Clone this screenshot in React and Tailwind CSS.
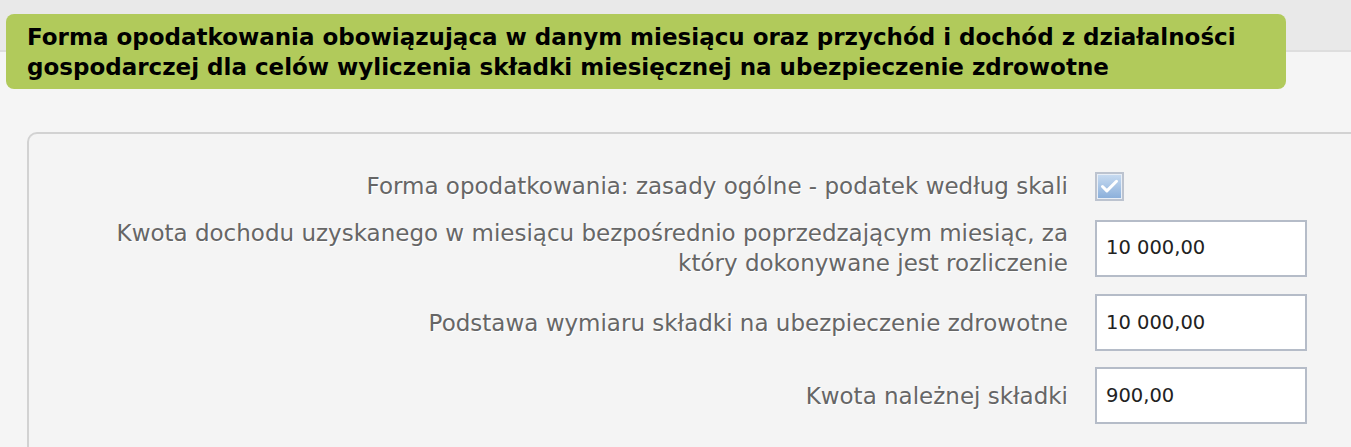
import { Check } from 'lucide-react';

const rows = [
  { label: 'Kwota dochodu uzyskanego w miesiącu bezpośrednio poprzedzającym miesiąc, za który dokonywane jest rozliczenie', value: '10 000,00', gap: 'mt-[17px]' },
  { label: 'Podstawa wymiaru składki na ubezpieczenie zdrowotne', value: '10 000,00', gap: 'mt-[16px]' },
  { label: 'Kwota należnej składki', value: '900,00', gap: 'mt-[16px]' },
];

function Label({ children }) {
  return (
    <div className="w-[1039px] shrink-0 pl-[59px] text-right text-[23px] leading-[30px] text-[#666] [text-shadow:1px_1px_0_#fff]">
      {children}
    </div>
  );
}

export default function App() {
  return (
    <div className="min-h-[447px] overflow-hidden bg-[linear-gradient(#e9e9e9_0_50px,#dedede_50px_52px,#f5f5f5_52px)] pt-[14px] font-['DejaVu_Sans',sans-serif]">
      <div className="ml-[6px] w-[1280px] rounded-[8px] bg-[#b1ca5b] px-[21px] pt-[8px] pb-[7px] text-[23px] font-bold leading-[30px] text-black">
        Forma opodatkowania obowiązująca w danym miesiącu oraz przychód i dochód z działalności
        <br />
        gospodarczej dla celów wyliczenia składki miesięcznej na ubezpieczenie zdrowotne
      </div>

      <div className="ml-[27px] mt-[43px] min-h-[330px] rounded-tl-[10px] border-l-2 border-t-2 border-[#d2d2d2] bg-[#f4f4f4] pt-[37px]">
        <div className="flex items-center">
          <Label>Forma opodatkowania: zasady ogólne - podatek według skali</Label>
          <div className="ml-[27px] flex h-[29px] w-[29px] items-center justify-center border-2 border-[#bcc3cf] bg-[#e8eef6]">
            <div className="flex h-[23px] w-[23px] items-center justify-center bg-[linear-gradient(#c6daf0,#8cb0db)]">
              <Check size={21} strokeWidth={3.5} className="text-white" />
            </div>
          </div>
        </div>
        {rows.map((row) => (
          <div key={row.label} className={`flex items-center ${row.gap}`}>
            <Label>{row.label}</Label>
            <div className="ml-[27px] flex h-[57px] w-[212px] items-center border-2 border-[#b5bcc8] bg-white pl-[9px] text-[19.5px] text-[#222]">
              {row.value}
            </div>
          </div>
        ))}
      </div>
    </div>
  );
}
